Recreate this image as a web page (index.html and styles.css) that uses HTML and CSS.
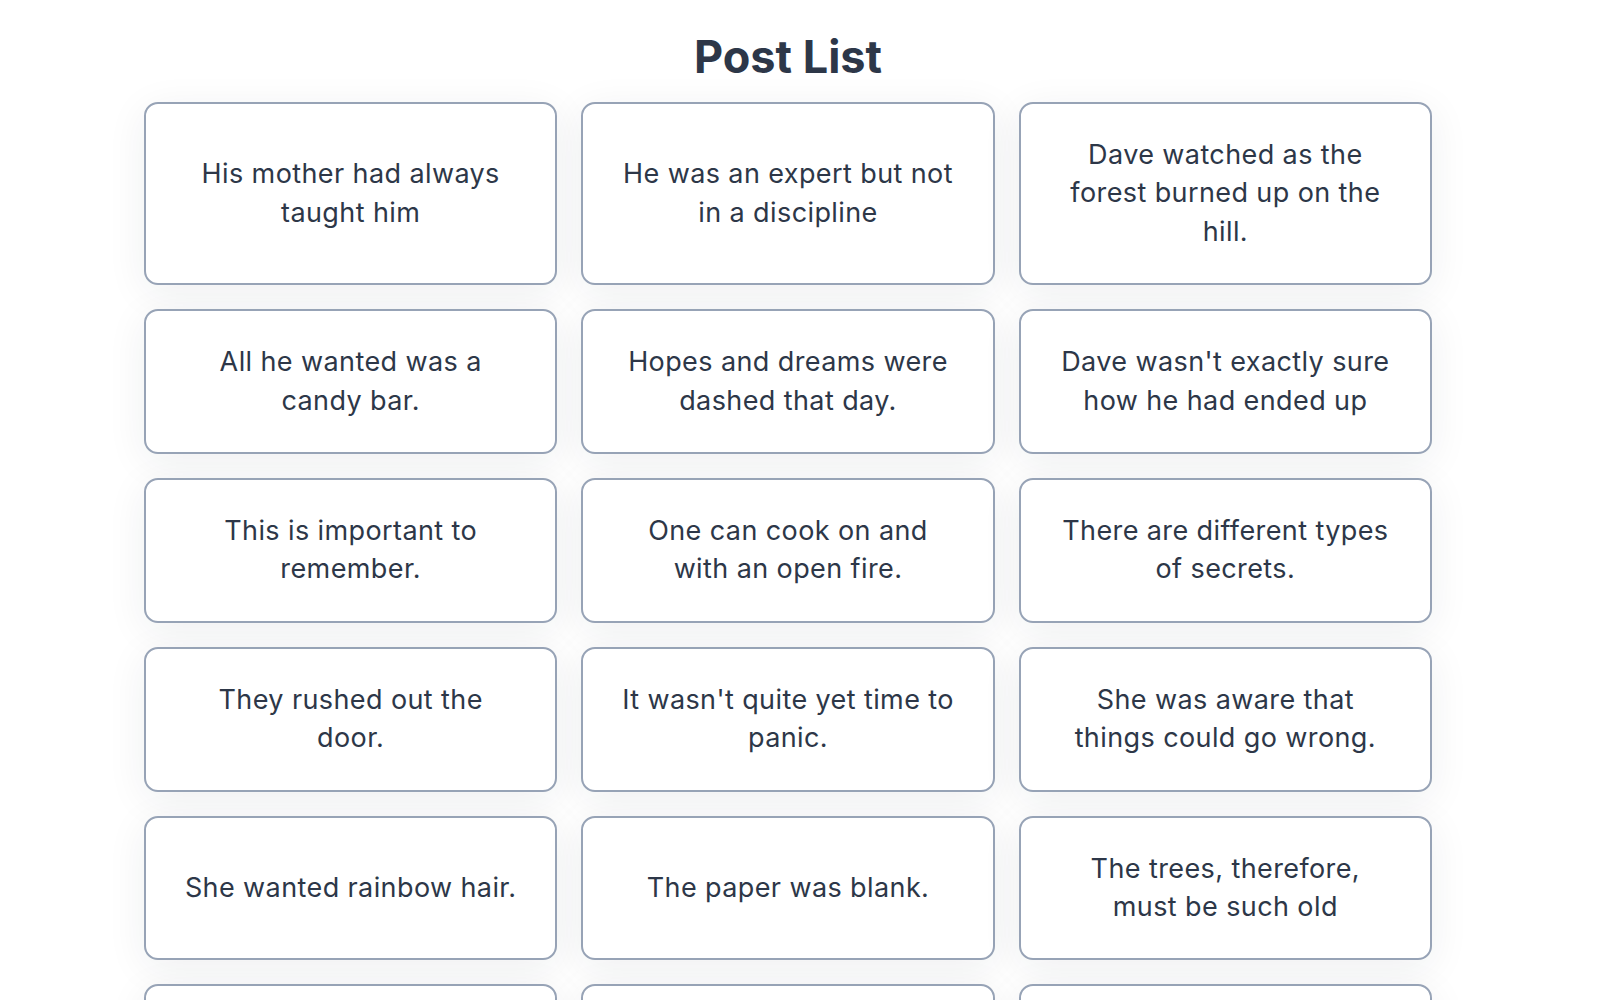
FILE: index.html
```html
<!DOCTYPE html>
<html lang="en">
<head>
<meta charset="utf-8">
<title>Post List</title>
<link rel="stylesheet" href="styles.css">
</head>
<body>
<main class="page">
  <h1 class="title">Post List</h1>
  <section class="grid">
    <article class="card"><p>His mother had always<br>taught him</p></article>
    <article class="card"><p>He was an expert but not<br>in a discipline</p></article>
    <article class="card"><p>Dave watched as the<br>forest burned up on the<br>hill.</p></article>
    <article class="card"><p>All he wanted was a<br>candy bar.</p></article>
    <article class="card"><p>Hopes and dreams were<br>dashed that day.</p></article>
    <article class="card"><p>Dave wasn't exactly sure<br>how he had ended up</p></article>
    <article class="card"><p>This is important to<br>remember.</p></article>
    <article class="card"><p>One can cook on and<br>with an open fire.</p></article>
    <article class="card"><p>There are different types<br>of secrets.</p></article>
    <article class="card"><p>They rushed out the<br>door.</p></article>
    <article class="card"><p>It wasn't quite yet time to<br>panic.</p></article>
    <article class="card"><p>She was aware that<br>things could go wrong.</p></article>
    <article class="card"><p>She wanted rainbow hair.</p></article>
    <article class="card"><p>The paper was blank.</p></article>
    <article class="card"><p>The trees, therefore,<br>must be such old</p></article>
    <article class="card"><p>There was only one way<br>to do things</p></article>
    <article class="card"><p>Things aren't going<br>well at all</p></article>
    <article class="card"><p>It went through such<br>rapid contortions</p></article>
  </section>
</main>
</body>
</html>
```
FILE: styles.css
```css
html, body {
  margin: 0;
  padding: 0;
  background: #ffffff;
}

body {
  font-family: Inter, "Noto Sans", "Liberation Sans", sans-serif;
  color: #2d3748;
}

.page {
  padding: 0 168px 40px 144px;
}

.title {
  margin: 0;
  padding: 31px 0 19px;
  text-align: center;
  font-size: 45px;
  line-height: 52px;
  font-weight: 700;
  color: #2d3748;
}

.grid {
  display: grid;
  grid-template-columns: repeat(3, 1fr);
  gap: 24px;
}

.card {
  display: flex;
  align-items: center;
  justify-content: center;
  padding: 32px 16px;
  border: 2px solid #97a3b6;
  border-radius: 14px;
  background: #ffffff;
  box-shadow: 0 8px 40px rgba(30, 41, 59, 0.07);
  text-align: center;
}

.card p {
  margin: 0;
  font-size: 27px;
  line-height: 38.4px;
  letter-spacing: 0.4px;
  color: #2d3748;
  white-space: nowrap;
}
```
